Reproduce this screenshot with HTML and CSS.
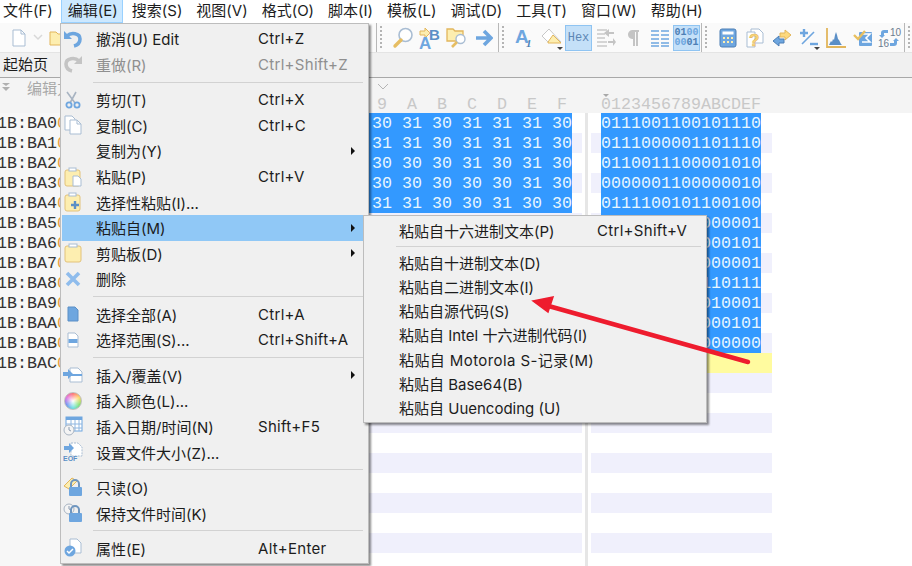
FILE: index.html
```html
<!DOCTYPE html>
<html lang="zh-CN">
	<head>
		<meta charset="UTF-8" />
		<title>WinHex 编辑</title>
		<link rel="stylesheet" href="styles.css">
	</head>
	<body>
		<div class="menubar">
			<span class="mb-item">文件(F)</span>
			<span class="mb-item active">编辑(E)</span>
			<span class="mb-item">搜索(S)</span>
			<span class="mb-item">视图(V)</span>
			<span class="mb-item">格式(O)</span>
			<span class="mb-item">脚本(I)</span>
			<span class="mb-item">模板(L)</span>
			<span class="mb-item">调试(D)</span>
			<span class="mb-item">工具(T)</span>
			<span class="mb-item">窗口(W)</span>
			<span class="mb-item">帮助(H)</span>
		</div>

		<div class="toolbar">
			<div class="tb-start">
				<svg class="tb-new" width="16" height="18" viewBox="0 0 16 18"><path d="M2 1h8l4 4v12H2z" fill="#fff" stroke="#a9bdd3"/><path d="M10 1v4h4" fill="none" stroke="#a9bdd3"/></svg>
				<svg class="tb-drop" width="12" height="8" viewBox="0 0 12 8"><path d="M2 1l4 4 4-4" fill="none" stroke="#d8d8d8" stroke-width="1.5"/></svg>
				<svg width="18" height="16" viewBox="0 0 18 16"><path d="M1 2h6l2 2h8v11H1z" fill="#fdeeb0" stroke="#e2b65c"/></svg>
			</div>
			<div class="tb-group">
				<span class="grip"></span>
				<span class="tb-btn"><svg width="22" height="22" viewBox="0 0 22 22"><circle cx="13.5" cy="8" r="6.5" fill="#fff" stroke="#a9bdd3" stroke-width="1.6"/><path d="M9 13l-6 6" stroke="#e6bd62" stroke-width="3.4" stroke-linecap="round"/></svg></span>
				<span class="tb-btn"><svg width="24" height="24" viewBox="0 0 24 24"><path d="M2 5h5V2l5 5-5 5V9H2z" fill="#fdeeb0" stroke="#e2b65c"/><text x="11" y="14" class="ico-b">B</text><text x="1" y="23" class="ico-a">A</text></svg></span>
				<span class="tb-btn"><svg width="22" height="22" viewBox="0 0 22 22"><path d="M1 2h6l2 2h8v10H1z" fill="#fdeeb0" stroke="#e2b65c" stroke-width="1.3"/><circle cx="14.5" cy="12" r="4.5" fill="#fff" stroke="#a9bdd3" stroke-width="1.4"/><path d="M11 15l-5 5" stroke="#e6bd62" stroke-width="2.6"/></svg></span>
				<span class="tb-btn"><svg width="18" height="18" viewBox="0 0 18 18"><path d="M1 9h13M9 2l7 7-7 7" fill="none" stroke="#6ea6df" stroke-width="3.6"/></svg></span>
			</div>
			<div class="tb-group">
				<span class="grip"></span>
				<span class="tb-btn"><svg width="20" height="22" viewBox="0 0 20 22"><text x="0" y="16" class="ico-big">A</text><text x="11" y="20" class="ico-small">1</text></svg></span>
				<span class="tb-btn tb-caret"><svg width="22" height="20" viewBox="0 0 22 20"><path d="M8 1L1 8l6 6h13z" fill="#fff" stroke="#c8c8c8"/><path d="M7 14l5-7 8 8H7z" fill="#fdeeb0" stroke="#e2b65c"/></svg></span>
				<span class="tb-btn on hex-label">Hex</span>
				<span class="tb-btn"><svg width="20" height="20" viewBox="0 0 20 20"><path d="M1 2h10M1 6h8M1 10h8M1 14h10M1 18h10" stroke="#c9c9c9" stroke-width="1.6"/><path d="M18 4h-5V1l-5 4 5 4V6h5zM12 13h5v-3l3 4-3 4v-3h-5z" fill="#c4c4c4"/></svg></span>
				<span class="tb-btn"><svg width="14" height="18" viewBox="0 0 14 18"><path d="M6 1h7v2h-1v14h-2V3H9v14H7V10a4.5 4.5 0 0 1-1-9z" fill="#c4c4c4"/></svg></span>
				<span class="tb-btn"><svg width="18" height="18" viewBox="0 0 18 18"><path d="M0 2h8M10 2h8M0 6h8M10 6h8M0 10h8M10 10h8M0 14h8M10 14h8M0 17h8M10 17h8" stroke="#6ea6df" stroke-width="1.4"/></svg></span>
				<span class="tb-btn on bin-label"><span>01<i>00</i></span><span><i>00</i>01</span></span>
			</div>
			<div class="tb-group">
				<span class="grip"></span>
				<span class="tb-btn"><svg width="18" height="20" viewBox="0 0 18 20"><rect x="1" y="1" width="16" height="18" rx="2" fill="#6ea6df" stroke="#4d7fb5"/><rect x="3.500" y="3.500" width="11" height="3" fill="#fff"/><path d="M4 9h2v2H4zM8 9h2v2H8zM12 9h2v2h-2zM4 13h2v2H4zM8 13h2v2H8zM12 13h2v2h-2z" fill="#fdeeb0"/></svg></span>
				<span class="tb-btn"><svg width="18" height="20" viewBox="0 0 18 20"><path d="M5 1h8l4 4v10H5z" fill="#fff" stroke="#a9bdd3"/><path d="M1 4h8v15H1z" fill="#fff" stroke="#a9bdd3"/><text x="3" y="18" class="ico-help">?</text></svg></span>
				<span class="tb-btn"><svg width="20" height="18" viewBox="0 0 20 18"><path d="M8 4h5V1l6 5-6 5V8H8z" fill="#fdd97d" stroke="#e2b65c"/><path d="M12 10H7V7l-6 5 6 5v-3h5z" fill="#6ea6df" stroke="#4d7fb5"/></svg></span>
				<span class="tb-btn tb-caret"><svg width="18" height="18" viewBox="0 0 18 18"><path d="M0 4h8M4 0v8" stroke="#6ea6df" stroke-width="2.4"/><path d="M2 15L14 3" stroke="#6ea6df" stroke-width="1.600"/><path d="M10 15h8" stroke="#6ea6df" stroke-width="2.4"/></svg></span>
				<span class="tb-btn"><svg width="20" height="20" viewBox="0 0 20 20"><path d="M1 0v19h19" fill="none" stroke="#e2b65c" stroke-width="1.8"/><path d="M3 17l2-4 1 1 1-3 1 1 1-5 1-3 1 3 1 4 1 1 1 2 1 2 1 1z" fill="#5b8fc6"/></svg></span>
				<span class="tb-btn"><svg width="20" height="18" viewBox="0 0 20 18"><rect x="6" y="3" width="13" height="14" rx="1" fill="#6ea6df"/><path d="M9 5h8l-4 4 4 4H9" fill="none" stroke="#fff" stroke-width="1.6"/><path d="M1 6l4 4 7-8" fill="none" stroke="#e8c060" stroke-width="2.4"/></svg></span>
				<span class="tb-btn"><svg width="24" height="20" viewBox="0 0 24 20"><path d="M10 2H6a3 3 0 0 0-3 3v2H1l3 3 3-3H6V5h4zM12 18h4a3 3 0 0 0 3-3v-2h2l-3-3-3 3h1v2h-4z" fill="#6ea6df"/><text x="12" y="8" class="ico-num">10</text><text x="0" y="19" class="ico-num">16</text></svg></span>
			</div>
			<span class="grip grip-end"></span>
		</div>

		<div class="tabs"><span class="tab">起始页</span></div>

		<div class="head">
			<div class="head-top">
				<svg class="head-mark" width="8" height="8" viewBox="0 0 8 8"><path d="M0 0h8L4 3zM0 4h8L4 8z" fill="#b0b0b0"/></svg>
				<span class="head-label">编辑方</span>
				<svg class="head-chev" width="10" height="6" viewBox="0 0 10 6"><path d="M0 0l5 5 5-5" fill="none" stroke="#b4b4b4"/></svg>
			</div>
			<div class="head-cols">
				<div class="head-hex">9  A  B  C  D  E  F</div>
				<div class="head-txt"><span class="head-cur"></span>0123456789ABCDEF</div>
			</div>
		</div>

		<div class="grid">
			<div class="row"><div class="addr">1B:BA0<b>0</b></div><div class="hex"><span class="sel">30 31 30 31 31 31 30</span></div><div class="gut"></div><div class="txt"><span class="sel">0111001100101110</span></div></div>
			<div class="row"><div class="addr">1B:BA1<b>0</b></div><div class="hex"><span class="sel">31 31 30 31 31 31 30</span></div><div class="gut"></div><div class="txt"><span class="sel">0111000001101110</span></div></div>
			<div class="row"><div class="addr">1B:BA2<b>0</b></div><div class="hex"><span class="sel">30 30 30 31 30 31 30</span></div><div class="gut"></div><div class="txt"><span class="sel">0110011100001010</span></div></div>
			<div class="row"><div class="addr">1B:BA3<b>0</b></div><div class="hex"><span class="sel">30 30 30 30 30 31 30</span></div><div class="gut"></div><div class="txt"><span class="sel">0000001100000010</span></div></div>
			<div class="row"><div class="addr">1B:BA4<b>0</b></div><div class="hex"><span class="sel">31 31 30 30 31 30 30</span></div><div class="gut"></div><div class="txt"><span class="sel">0111100101100100</span></div></div>
			<div class="row"><div class="addr">1B:BA5<b>0</b></div><div class="hex"></div><div class="gut"></div><div class="txt"><span class="sel">000001</span></div></div>
			<div class="row"><div class="addr">1B:BA6<b>0</b></div><div class="hex"></div><div class="gut"></div><div class="txt"><span class="sel">000101</span></div></div>
			<div class="row"><div class="addr">1B:BA7<b>0</b></div><div class="hex"></div><div class="gut"></div><div class="txt"><span class="sel">000001</span></div></div>
			<div class="row"><div class="addr">1B:BA8<b>0</b></div><div class="hex"></div><div class="gut"></div><div class="txt"><span class="sel">110111</span></div></div>
			<div class="row"><div class="addr">1B:BA9<b>0</b></div><div class="hex"></div><div class="gut"></div><div class="txt"><span class="sel">010001</span></div></div>
			<div class="row"><div class="addr">1B:BAA<b>0</b></div><div class="hex"></div><div class="gut"></div><div class="txt"><span class="sel">000101</span></div></div>
			<div class="row"><div class="addr">1B:BAB<b>0</b></div><div class="hex"></div><div class="gut"></div><div class="txt"><span class="sel">000000</span></div></div>
			<div class="row cur"><div class="addr">1B:BAC<b>0</b></div><div class="hex"></div><div class="gut"></div><div class="txt"></div></div>
			<div class="row"><div class="addr"></div><div class="hex"></div><div class="gut"></div><div class="txt"></div></div>
			<div class="row"><div class="addr"></div><div class="hex"></div><div class="gut"></div><div class="txt"></div></div>
			<div class="row"><div class="addr"></div><div class="hex"></div><div class="gut"></div><div class="txt"></div></div>
			<div class="row"><div class="addr"></div><div class="hex"></div><div class="gut"></div><div class="txt"></div></div>
			<div class="row"><div class="addr"></div><div class="hex"></div><div class="gut"></div><div class="txt"></div></div>
			<div class="row"><div class="addr"></div><div class="hex"></div><div class="gut"></div><div class="txt"></div></div>
			<div class="row"><div class="addr"></div><div class="hex"></div><div class="gut"></div><div class="txt"></div></div>
			<div class="row"><div class="addr"></div><div class="hex"></div><div class="gut"></div><div class="txt"></div></div>
			<div class="row"><div class="addr"></div><div class="hex"></div><div class="gut"></div><div class="txt"></div></div>
			<div class="row"><div class="addr"></div><div class="hex"></div><div class="gut"></div><div class="txt"></div></div>
		</div>

		<!-- 编辑 menu -->
		<div class="menu main-menu">
			<div class="mi"><span class="mi-icon"><svg width="20" height="18" viewBox="0 0 20 18"><path d="M1 1v8h8z" fill="#6ea6df"/><path d="M4 6c4-4 13-3 13 3 0 3-2 6-6 7" fill="none" stroke="#6ea6df" stroke-width="3.600"/></svg></span><span class="mi-label">撤消(U) Edit</span><span class="key">Ctrl+Z</span></div>
			<div class="mi off"><span class="mi-icon"><svg width="20" height="18" viewBox="0 0 20 18"><path d="M19 1v8h-8z" fill="#c4c4c4"/><path d="M16 6C12 2 3 3 3 9c0 3 2 6 6 7" fill="none" stroke="#c4c4c4" stroke-width="3.600"/></svg></span><span class="mi-label">重做(R)</span><span class="key">Ctrl+Shift+Z</span></div>
			<div class="sep"></div>
			<div class="mi"><span class="mi-icon"><svg width="16" height="18" viewBox="0 0 16 18"><path d="M2 1l8 11M11 1L5 12" stroke="#a8b4c2" stroke-width="1.600"/><circle cx="4" cy="14" r="2.600" fill="none" stroke="#6ea6df" stroke-width="1.800"/><circle cx="12" cy="14" r="2.600" fill="none" stroke="#6ea6df" stroke-width="1.800"/></svg></span><span class="mi-label">剪切(T)</span><span class="key">Ctrl+X</span></div>
			<div class="mi"><span class="mi-icon"><svg width="18" height="20" viewBox="0 0 18 20"><path d="M1 1h7l3 3v11H1z" fill="#fff" stroke="#a9bdd3"/><path d="M6 5h7l4 4v10H6z" fill="#fff" stroke="#a9bdd3"/><path d="M13 5v4h4" fill="none" stroke="#a9bdd3"/></svg></span><span class="mi-label">复制(C)</span><span class="key">Ctrl+C</span></div>
			<div class="mi"><span class="mi-icon"></span><span class="mi-label">复制为(Y)</span><span class="mi-arrow"></span></div>
			<div class="mi"><span class="mi-icon"><svg width="18" height="20" viewBox="0 0 18 20"><rect x="1" y="3" width="15" height="16" rx="2" fill="#fdeeb0" stroke="#e2c27a"/><rect x="5" y="1" width="7" height="3" fill="#fff" stroke="#a9bdd3"/><path d="M9 9h5l3 3v7H9z" fill="#fff" stroke="#a9bdd3"/></svg></span><span class="mi-label">粘贴(P)</span><span class="key">Ctrl+V</span></div>
			<div class="mi"><span class="mi-icon"><svg width="18" height="20" viewBox="0 0 18 20"><rect x="1" y="3" width="15" height="16" rx="2" fill="#fdeeb0" stroke="#e2c27a"/><rect x="5" y="1" width="7" height="3" fill="#fff" stroke="#a9bdd3"/><path d="M11 9v8M7 13h8" stroke="#5b8fc6" stroke-width="2.400"/></svg></span><span class="mi-label">选择性粘贴(I)...</span></div>
			<div class="mi hl"><span class="mi-icon"></span><span class="mi-label">粘贴自(M)</span><span class="mi-arrow"></span></div>
			<div class="mi"><span class="mi-icon"><svg width="18" height="20" viewBox="0 0 18 20"><rect x="1" y="3" width="16" height="16" rx="2" fill="#fdeeb0" stroke="#e2c27a"/><rect x="5" y="1" width="8" height="3" fill="#fff" stroke="#a9bdd3"/></svg></span><span class="mi-label">剪贴板(D)</span><span class="mi-arrow"></span></div>
			<div class="mi"><span class="mi-icon"><svg width="16" height="16" viewBox="0 0 16 16"><path d="M2 2l12 12M14 2L2 14" stroke="#8fbcec" stroke-width="3.600"/></svg></span><span class="mi-label">删除</span></div>
			<div class="sep"></div>
			<div class="mi"><span class="mi-icon"><svg width="12" height="16" viewBox="0 0 12 16"><path d="M1 1h7l3 3v11H1z" fill="#6ea6df" stroke="#5b8fc6"/></svg></span><span class="mi-label">选择全部(A)</span><span class="key">Ctrl+A</span></div>
			<div class="mi"><span class="mi-icon"><svg width="12" height="16" viewBox="0 0 12 16"><path d="M1 1h7l3 3v11H1z" fill="#fff" stroke="#a9bdd3"/><rect x="1.500" y="7" width="9" height="4" fill="#6ea6df"/></svg></span><span class="mi-label">选择范围(S)...</span><span class="key">Ctrl+Shift+A</span></div>
			<div class="sep"></div>
			<div class="mi"><span class="mi-icon"><svg width="20" height="16" viewBox="0 0 20 16"><path d="M7 1h8l4 4v10H7z" fill="#fff" stroke="#a9bdd3"/><rect x="8" y="7" width="11" height="2" fill="#6ea6df"/><path d="M0 5h5V2l5 5-5 5V9H0z" fill="#6ea6df"/></svg></span><span class="mi-label">插入/覆盖(V)</span><span class="mi-arrow"></span></div>
			<div class="mi"><span class="mi-icon"><span class="wheel"></span></span><span class="mi-label">插入颜色(L)...</span></div>
			<div class="mi"><span class="mi-icon"><svg width="20" height="20" viewBox="0 0 20 20"><rect x="3" y="1" width="16" height="14" fill="#fff" stroke="#6ea6df"/><rect x="3" y="1" width="16" height="3" fill="#6ea6df"/><path d="M8 4v11M12 4v11M16 4v11M3 8h16M3 12h16" stroke="#8fb6e0"/><circle cx="6" cy="14" r="5" fill="#f4f4f4" stroke="#a8b4c2"/><path d="M6 11v3l2 1" fill="none" stroke="#8a9bb0"/></svg></span><span class="mi-label">插入日期/时间(N)</span><span class="key">Shift+F5</span></div>
			<div class="mi"><span class="mi-icon"><svg width="20" height="20" viewBox="0 0 20 20"><path d="M8 1h7l4 4v9H8z" fill="#fff" stroke="#a9bdd3" stroke-dasharray="2 1"/><path d="M1 4h5V1l5 5-5 5V8H1z" fill="#6ea6df"/><text x="0" y="19" class="ico-eof">EOF</text></svg></span><span class="mi-label">设置文件大小(Z)...</span></div>
			<div class="sep"></div>
			<div class="mi"><span class="mi-icon"><svg width="20" height="20" viewBox="0 0 20 20"><path d="M1 9l8-8 5 3-8 8z" fill="#fdeeb0" stroke="#e2b65c"/><path d="M8 10V7a4 4 0 0 1 8 0v3" fill="none" stroke="#6f96bf" stroke-width="2"/><rect x="6" y="10" width="13" height="9" rx="1" fill="#6ea6df"/></svg></span><span class="mi-label">只读(O)</span></div>
			<div class="mi"><span class="mi-icon"><svg width="20" height="20" viewBox="0 0 20 20"><circle cx="6" cy="6" r="5" fill="#f4f4f4" stroke="#a8b4c2"/><path d="M6 3v3l2 1" fill="none" stroke="#8a9bb0"/><path d="M8 10V7a4 4 0 0 1 8 0v3" fill="none" stroke="#6f96bf" stroke-width="2"/><rect x="6" y="10" width="13" height="9" rx="1" fill="#6ea6df"/></svg></span><span class="mi-label">保持文件时间(K)</span></div>
			<div class="sep"></div>
			<div class="mi"><span class="mi-icon"><svg width="20" height="20" viewBox="0 0 20 20"><path d="M7 1h7l4 4v10H7z" fill="#fff" stroke="#a9bdd3"/><circle cx="7" cy="13" r="5.500" fill="#6ea6df"/><path d="M4 13l2 2 4-4" fill="none" stroke="#fff" stroke-width="1.500"/></svg></span><span class="mi-label">属性(E)</span><span class="key">Alt+Enter</span></div>
		</div>

		<!-- 粘贴自 submenu -->
		<div class="menu sub-menu">
			<div class="si"><span class="si-label">粘贴自十六进制文本(P)</span><span class="key">Ctrl+Shift+V</span></div>
			<div class="sep sub-sep"></div>
			<div class="si">粘贴自十进制文本(D)</div>
			<div class="si">粘贴自二进制文本(I)</div>
			<div class="si">粘贴自源代码(S)</div>
			<div class="si">粘贴自 Intel 十六进制代码(I)</div>
			<div class="si tracked">粘贴自 Motorola S-记录(M)</div>
			<div class="si">粘贴自 Base64(B)</div>
			<div class="si">粘贴自 Uuencoding (U)</div>
		</div>

		<svg class="callout" width="912" height="566" viewBox="0 0 912 566"><path d="M748 362L545 305" stroke="#ee1c2e" stroke-width="4.500" stroke-linecap="round"/><path d="M533 301l20-4-5 15z" fill="#ee1c2e" stroke="#ee1c2e" stroke-width="1.500"/></svg>
	</body>
</html>
```

FILE: styles.css
```css
body {
	position: relative;
	width: 912px;
	height: 566px;
	margin: 0;
	overflow: hidden;
	background: #fff;
	color: #1c1c1c;
	font-family: Inter, "Noto Sans CJK SC", sans-serif;
	font-size: 15px;
}
.menubar {
	display: flex;
	height: 23px;
	padding-left: 3px;
	line-height: 22px;
}
.mb-item {
	margin-right: 14px;
	white-space: nowrap;
}
.mb-item.active {
	margin: 0 9px 0 -6px;
	padding: 0 4px 0 6px;
	background: #cce8ff;
	border: 1px solid #99d1ff;
	border-top: 0;
	height: 23px;
	box-sizing: border-box;
}

/* toolbar */
.toolbar {
	display: flex;
	height: 30px;
	background: #fafafa;
	border-bottom: 1px solid #e4e4e4;
	box-sizing: border-box;
}
.tb-start {
	display: flex;
	align-items: center;
	width: 377px;
	padding-left: 11px;
	box-sizing: border-box;
	border-right: 1px solid #b8b8b8;
	gap: 5px;
}
.tb-start svg {
	flex: none;
}
.tb-group {
	display: flex;
	align-items: center;
	padding-right: 1px;
	border-right: 1px solid #b8b8b8;
}
.grip {
	width: 2px;
	height: 24px;
	margin: 0 7px 0 3px;
	background: repeating-linear-gradient(#b4b4b4 0 2px, transparent 2px 4px);
}
.grip-end {
	margin: 3px 0 0 3px;
}
.tb-btn {
	display: flex;
	flex-direction: column;
	align-items: center;
	justify-content: center;
	position: relative;
	width: 27px;
	height: 26px;
	box-sizing: border-box;
}
.tb-btn.on {
	background: #c4e0f8;
	border: 1px solid #8fc4f2;
}
.tb-caret::after {
	content: "";
	position: absolute;
	right: 2px;
	bottom: 1px;
	border: 3px solid transparent;
	border-top-color: #444;
	border-bottom: 0;
}
.hex-label {
	color: #5d87b5;
	font-family: "Liberation Mono", monospace;
	font-size: 12px;
}
.bin-label {
	color: #4d7fb5;
	font-family: "Liberation Mono", monospace;
	font-size: 10px;
	font-weight: bold;
	line-height: 10px;
}
.bin-label i {
	color: #6ea6df;
	font-style: normal;
}
.ico-a {
	fill: #6ea6df;
	font: bold 17px "Liberation Sans", sans-serif;
}
.ico-b {
	fill: #5b8fc6;
	font: bold 15px "Liberation Sans", sans-serif;
}
.ico-big {
	fill: #6ea6df;
	font: bold 19px "Liberation Sans", sans-serif;
}
.ico-small {
	fill: #4d7fb5;
	font: italic bold 11px "Liberation Serif", serif;
}
.ico-help {
	fill: #fdd97d;
	stroke: #e2b65c;
	stroke-width: 0.6;
	font: bold 17px "Liberation Sans", sans-serif;
}
.ico-num {
	fill: #6b7c8f;
	font: 10px "Liberation Sans", sans-serif;
}
.ico-eof {
	fill: #5b8fc6;
	font: bold 7px "Liberation Sans", sans-serif;
}

/* tab strip and column header */
.tabs {
	height: 25px;
	background: #f0f0f0;
	border-bottom: 1px solid #a8a8a8;
	box-sizing: border-box;
	line-height: 24px;
	padding-left: 3px;
}
.head {
	height: 35px;
	background: #f4f4f4;
	color: #c8c8c8;
	box-sizing: border-box;
}
.head-top {
	display: flex;
	align-items: center;
	height: 18px;
	color: #a8a8a8;
}
.head-mark {
	margin: 0 0 0 2px;
}
.head-label {
	width: 33px;
	margin-left: 17px;
	overflow: hidden;
	white-space: nowrap;
}
.head-chev {
	margin-left: 318px;
}
.head-cols {
	display: flex;
	height: 17px;
	font-family: "Liberation Mono", monospace;
	font-size: 16.67px;
	line-height: 17px;
	white-space: pre;
}
.head-hex {
	width: 567px;
	text-align: right;
}
.head-txt {
	position: relative;
	margin-left: 34px;
}
.head-cur {
	position: absolute;
	left: 2px;
	top: -2px;
	border: 3px solid transparent;
	border-top-color: #a8a8a8;
	border-bottom: 0;
}

/* hex grid */
.grid {
	font-family: "Liberation Mono", monospace;
	font-size: 16.67px;
	line-height: 21px;
}
.row {
	display: flex;
	height: 20px;
	white-space: pre;
}
.addr {
	flex: none;
	width: 63px;
	height: 20px;
	margin-left: -3px;
	overflow: hidden;
	background: #f7f7f7;
	color: #333;
}
.addr b {
	color: #e8a040;
	font-weight: normal;
}
.hex {
	display: flex;
	justify-content: flex-end;
	width: 512px;
	padding-right: 10px;
}
.hex .sel {
	padding-left: 3px;
}
.gut {
	width: 3px;
	margin: 0 3px;
	background: #e6e6e6;
}
.txt {
	width: 171px;
	padding-left: 10px;
}
.row:nth-child(even) .hex,
.row:nth-child(even) .txt {
	background: #f0f0fc;
}
.row.cur .hex,
.row.cur .txt {
	background: #fffb9f;
}
.sel {
	display: block;
	height: 20px;
	background: #3399ff;
	color: #e8f6ff;
}
.txt .sel {
	width: 160px;
	text-align: right;
}

/* popup menus */
.menu {
	position: absolute;
	box-sizing: border-box;
	background: #f0f0f0;
	border: 1px solid #bdbdbd;
	box-shadow: 2px 2px 2px rgba(0, 0, 0, 0.45);
}
.main-menu {
	left: 60px;
	top: 23px;
	width: 309px;
	padding: 2px 1px;
}
.sub-menu {
	left: 363px;
	top: 215px;
	width: 344px;
	padding: 2px 1px 2px;
}
.mi {
	display: flex;
	align-items: center;
	height: 25.6px;
	white-space: nowrap;
}
.mi.off {
	color: #8f8f8f;
}
.mi.hl {
	background: #90c8f6;
}
.mi-icon {
	display: flex;
	align-items: center;
	justify-content: center;
	flex: none;
	width: 22px;
	margin-right: 12px;
}
.mi-label {
	flex: none;
	width: 162px;
}
.key {
	letter-spacing: 0.3px;
}
.mi-arrow {
	margin-left: auto;
	margin-right: 12px;
	border: 4px solid transparent;
	border-left-color: #111;
	border-right: 0;
}
.sep {
	height: 1px;
	margin: 4.4px 4px 4.4px 31px;
	background: #d2d2d2;
}
.sub-sep {
	margin: 4px 4px 3px 31px;
}
.si {
	display: flex;
	align-items: center;
	height: 24.2px;
	padding-left: 34px;
	white-space: nowrap;
}
.si.tracked {
	letter-spacing: 0.4px;
}
.si-label {
	width: 198px;
}
.wheel {
	width: 18px;
	height: 18px;
	border-radius: 50%;
	background: radial-gradient(circle, #fff 0, rgba(255, 255, 255, 0) 70%), conic-gradient(#ff6a6a, #ffd45e, #7be06a, #62dfe0, #6a8cf0, #e06ae0, #ff6a6a);
	border: 1px solid #c0c0c0;
	box-sizing: border-box;
}
.callout {
	position: absolute;
	left: 0;
	top: 0;
	pointer-events: none;
}
```
